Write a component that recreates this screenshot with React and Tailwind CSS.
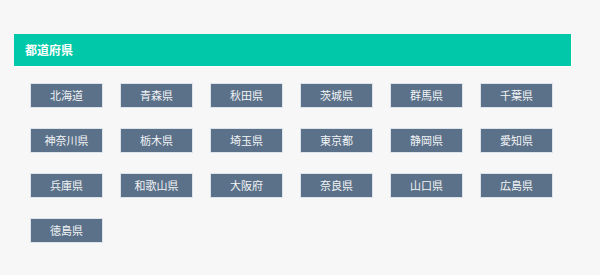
import React from 'react'

const prefectures = [
    '北海道', '青森県', '秋田県', '茨城県', '群馬県', '千葉県',
    '神奈川県', '栃木県', '埼玉県', '東京都', '静岡県', '愛知県',
    '兵庫県', '和歌山県', '大阪府', '奈良県', '山口県', '広島県',
    '徳島県',
]

function App() {
    return (
        <div className="w-[600px] h-[275px] bg-[#f7f7f7] pt-[34px] pl-[14px] font-['Noto_Sans_CJK_JP','Noto_Sans',sans-serif]">
            <div className="w-[558px] h-[33px] bg-[#00c8a8] border-r border-b border-white flex items-center pl-[11px]">
                <h2 className="text-white text-[12px] font-bold leading-none">都道府県</h2>
            </div>

            <div className="grid grid-cols-[repeat(6,73px)] gap-x-[17px] gap-y-[20px] mt-[16px] ml-[16px]">
                {prefectures.map((name) => (
                    <button
                        key={name}
                        className="h-[25px] bg-[#5b7189] border border-[#dde3ea] text-[#f2f4f6] text-[11px] leading-none flex items-center justify-center"
                    >
                        {name}
                    </button>
                ))}
            </div>
        </div>
    )
}

export default App
